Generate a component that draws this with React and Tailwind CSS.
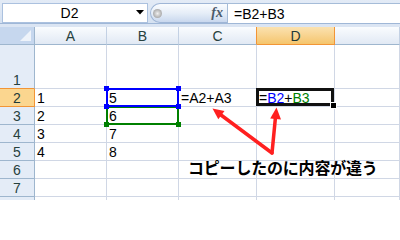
import React from "react";

const hdrText = "text-[#27413e]";
const font = { fontFamily: '"Liberation Sans", Arial, sans-serif' };

function ColHeader({ label, selected, leftOfSelected }) {
  const base =
    "flex items-center justify-center text-[14px] leading-none border-b ";
  if (selected) {
    return (
      <div className={base + "bg-linear-to-b from-[#fbe2b0] to-[#f5c56c] border-b-[#f29536] border-r border-r-[#f29536] text-[#1f3a38]"}>
        {label}
      </div>
    );
  }
  return (
    <div
      className={
        base +
        "bg-linear-to-b from-[#fafcfe] to-[#e1e9f4] border-b-[#9eb6ce] border-r " +
        (leftOfSelected ? "border-r-[#f29536] " : "border-r-[#c3d1e4] ") +
        hdrText
      }
    >
      {label}
    </div>
  );
}

function RowHeader({ n, selected, aboveSelected }) {
  const base =
    "flex items-end justify-center text-[14px] leading-[16px] border-r border-b ";
  if (selected) {
    return (
      <div className={base + "bg-[#fbd68f] border-r-[#f29536] border-b-[#f29536] text-[#1f3a38]"}>
        {n}
      </div>
    );
  }
  return (
    <div
      className={
        base +
        "bg-[#e4ecf7] border-r-[#9eb6ce] " +
        (aboveSelected ? "border-b-[#f29536] " : "border-b-[#9eb6ce] ") +
        hdrText
      }
    >
      {n}
    </div>
  );
}

function Cell({ children, className = "" }) {
  return (
    <div
      className={
        "relative flex items-end pl-[2px] text-[14px] leading-[16px] text-black border-r border-b border-r-[#d0d7e5] border-b-[#d0d7e5] whitespace-nowrap " +
        className
      }
    >
      {children}
    </div>
  );
}

function Handle({ pos, color }) {
  return <span className={"absolute w-[5px] h-[5px] " + color + " " + pos} />;
}

export default function App() {
  const data = {
    2: ["1", "5"],
    3: ["2", "6"],
    4: ["3", "7"],
    5: ["4", "8"],
  };
  const rows = [1, 2, 3, 4, 5, 6, 7, 8];

  return (
    <div
      className="relative w-[400px] h-[200px] overflow-hidden bg-white"
      style={font}
    >
      {/* Formula bar */}
      <div className="h-[24px] flex items-start pt-[3px] pl-[2px] bg-linear-to-b from-[#e3ebf6] to-[#d5e1f1] border-b border-b-[#9fb7d7]">
        <div className="w-[146px] h-[20px] flex items-center bg-white border border-[#abc1df]">
          <span className="flex-1 text-center text-[14px] leading-none text-black">
            D2
          </span>
          <svg width="8" height="5" viewBox="0 0 8 5" className="mr-[3px] mb-[1px]">
            <path d="M0 0 H8 L4 4.5 Z" fill="#000" />
          </svg>
        </div>
        <div className="ml-[2px] w-[77px] h-[20px] flex items-center rounded-l-full bg-linear-to-b from-[#fafcfe] via-[#e6eef8] to-[#c9d8ee] border border-[#9fb6d6] border-r-0">
          <span className="ml-[2px] w-[9px] h-[9px] rounded-full bg-radial from-[#f0f0f0] to-[#8f8f8f]" />
          <span
            className="ml-auto mr-[4px] text-[14px] leading-none italic font-bold text-[#4b5a6b]"
            style={{ fontFamily: '"Liberation Serif", "Times New Roman", serif' }}
          >
            fx
          </span>
        </div>
        <div className="flex-1 h-[20px] flex items-center bg-white border-t border-l border-[#a5bcd8] pl-[6px] text-[14px] leading-none text-black">
          =B2+B3
        </div>
      </div>
      <div className="h-[3px] bg-[#dbe5f3]" />

      {/* Grid */}
      <div className="grid grid-cols-[35px_72px_72px_78px_78px_1fr] grid-rows-[18px_44px_18px_18px_18px_18px_18px_18px_18px]">
        <div className="bg-[#c6d7ee] border-r border-b border-r-[#9eb6ce] border-b-[#9eb6ce] flex items-end justify-end p-[3px]">
          <svg width="11" height="11" viewBox="0 0 11 11">
            <path d="M11 0 V11 H0 Z" fill="#eef3fa" />
          </svg>
        </div>
        <ColHeader label="A" />
        <ColHeader label="B" />
        <ColHeader label="C" leftOfSelected />
        <ColHeader label="D" selected />
        <ColHeader label="" />

        {rows.map((r) => {
          const d = data[r] || ["", ""];
          return (
            <React.Fragment key={r}>
              <RowHeader n={r === 8 ? "" : r} selected={r === 2} aboveSelected={r === 1} />
              <Cell>{d[0]}</Cell>
              <Cell>
                {d[1]}
                {r === 2 && (
                  <>
                    <span className="absolute -left-[1px] -top-[1px] -right-[1px] -bottom-[1px] border-2 border-[#0000ff] z-20" />
                    <Handle pos="-left-[3px] -top-[3px] z-30" color="bg-[#0000ff]" />
                    <Handle pos="-right-[3px] -top-[3px] z-30" color="bg-[#0000ff]" />
                    <Handle pos="-left-[3px] -bottom-[3px] z-30" color="bg-[#0000ff]" />
                    <Handle pos="-right-[3px] -bottom-[3px] z-30" color="bg-[#0000ff]" />
                  </>
                )}
                {r === 3 && (
                  <>
                    <span className="absolute -left-[1px] -top-[1px] -right-[1px] -bottom-[1px] border-2 border-[#008000] z-10" />
                    <Handle pos="-left-[3px] -bottom-[3px] z-10" color="bg-[#008000]" />
                    <Handle pos="-right-[3px] -bottom-[3px] z-10" color="bg-[#008000]" />
                  </>
                )}
              </Cell>
              <Cell>{r === 2 ? "=A2+A3" : ""}</Cell>
              <Cell>
                {r === 2 && (
                  <>
                    <span className="relative z-10">
                      =<span className="text-[#0000ff]">B2</span>+
                      <span className="text-[#008000]">B3</span>
                    </span>
                    <span className="absolute -left-[1px] -top-[1px] right-0 bottom-0 border-[3px] border-[#111] z-20" />
                    <span className="absolute -right-[3px] -bottom-[3px] w-[7px] h-[7px] bg-black border border-white z-30" />
                  </>
                )}
              </Cell>
              <Cell />
            </React.Fragment>
          );
        })}
      </div>

      {/* Arrows */}
      <svg
        className="absolute left-0 top-0 pointer-events-none z-40"
        width="400"
        height="200"
        viewBox="0 0 400 200"
      >
        <g stroke="#ff2020" strokeWidth="3.5" strokeLinecap="round" fill="none">
          <line x1="272" y1="153" x2="221" y2="115" />
          <line x1="272" y1="153" x2="275.4" y2="118" />
        </g>
        <path d="M212.5 108.5 L224.5 111 L218.3 119.3 Z" fill="#ff2020" />
        <path d="M276.5 107.5 L281 119.5 L270.2 118.4 Z" fill="#ff2020" />
      </svg>

      {/* Callout */}
      <div
        className="absolute left-[188px] top-[159px] z-40 text-[16px] leading-[16px] font-bold text-black whitespace-nowrap tracking-[-0.2px]"
        style={{ fontFamily: '"Noto Sans CJK JP", "Noto Sans", sans-serif' }}
      >
        コピーしたのに内容が違う
      </div>
    </div>
  );
}
